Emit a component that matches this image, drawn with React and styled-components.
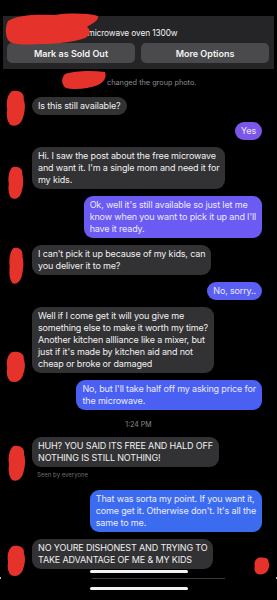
import React from 'react'
import styled, { createGlobalStyle } from 'styled-components'

const Global = createGlobalStyle`
  html, body {
    margin: 0;
    padding: 0;
    background: #000;
  }
  body {
    font-family: Inter, "Noto Sans", sans-serif;
    -webkit-font-smoothing: antialiased;
  }
`

const Screen = styled.div`
  width: 277px;
  height: 600px;
  background: #000;
  overflow: hidden;
  padding-top: 16px;
  box-sizing: border-box;
  display: flex;
  flex-direction: column;
`

const Panel = styled.div`
  position: relative;
  margin: 0 3px;
  background: #252527;
  padding: 12px 5px 6px 4px;
  display: flex;
  flex-direction: column;
  gap: 5px;
`

const Title = styled.div`
  position: relative;
  color: #f2f2f2;
  font-size: 8.3px;
  line-height: 10px;
  letter-spacing: -0.1px;
  text-align: center;
  padding-right: 11px;
`

const ButtonRow = styled.div`
  display: grid;
  grid-template-columns: 1fr 1fr;
  gap: 6px;
`

const Button = styled.div`
  height: 20px;
  border-radius: 5px;
  background: #4a4a4c;
  color: #f4f4f4;
  font-size: 9px;
  font-weight: 600;
  display: flex;
  align-items: center;
  justify-content: center;
`

const SystemLine = styled.div`
  display: flex;
  align-items: center;
  margin-top: 8px;
  padding-left: 60px;
  height: 10px;
  font-size: 7.3px;
  color: #8e8e93;
`

const NameRedact = styled.span`
  position: relative;
  width: 47px;
  height: 10px;
`

const Scribble = styled.svg`
  position: absolute;
  top: ${p => p.$top}px;
  left: ${p => p.$left ?? 0}px;
  width: ${p => p.$w}px;
  height: ${p => p.$h}px;
  z-index: 2;
  pointer-events: none;
`

const Thread = styled.div`
  display: flex;
  flex-direction: column;
  gap: 7px;
  margin-top: 10px;
`

const Row = styled.div`
  position: relative;
  display: flex;
  justify-content: ${p => (p.$mine ? 'flex-end' : 'flex-start')};
  padding: ${p => (p.$mine ? '0 15px 0 0' : '0 0 0 5px')};
`

const AvatarSlot = styled.div`
  position: relative;
  width: 27px;
  flex: none;
`

const Bubble = styled.div`
  background: ${p => p.$bg || '#323234'};
  color: ${p => (p.$bg ? '#ebe9ff' : '#f0f0f0')};
  border-radius: 9px;
  padding: 3px 6px;
  font-size: 9px;
  letter-spacing: -0.15px;
  line-height: 12px;
  white-space: pre-line;
`

const Time = styled.div`
  padding-top: 3px;
  height: 10px;
  line-height: 10px;
  text-align: center;
  font-size: 7px;
  color: #8a8a8e;
`

const Seen = styled.div`
  margin: -3px 0 4px 37px;
  height: 8px;
  line-height: 8px;
  font-size: 6px;
  color: #6c6c70;
`

const Footer = styled.div`
  position: relative;
  display: flex;
  flex-direction: column;
  align-items: center;
  padding-top: 1px;
`

const HomeBar = styled.div`
  width: 98px;
  height: 3px;
  border-radius: 2px;
  background: #f4f4f4;
`

const Divider = styled.div`
  align-self: stretch;
  display: flex;
  justify-content: space-between;
  align-items: center;
  margin: 4px 0 8px;
  height: 2px;

  span {
    width: 1px;
    height: 2px;
    background: #bbb;
  }
  i {
    width: 133px;
    height: 1px;
    margin-left: 40px;
    background: #3a3a3c;
  }
`

const RED = '#e5332b'

const Blob = ({ top, left, w, h }) => (
  <Scribble $top={top} $left={left} $w={w} $h={h} viewBox="0 0 20 36" preserveAspectRatio="none">
    <path
      fill={RED}
      d="M7 1 C13 0 18 3 17 9 C19 15 18 22 16 28 C14 34 9 36 5 34 C2 31 1 25 2 19 C1 13 2 7 4 4 C5 2 6 1 7 1 Z"
    />
  </Scribble>
)

const Avatar = ({ top, left = 0, w = 22, h = 34 }) => (
  <AvatarSlot>
    <Blob top={top} left={left} w={w} h={h} />
  </AvatarSlot>
)

const messages = [
  { kind: 'in', text: 'Is this still available?', av: { top: -7, left: 0, w: 22, h: 37 } },
  { kind: 'out', text: 'Yes', bg: '#7b57e9' },
  { kind: 'in', text: "Hi. I saw the post about the free microwave\nand want it. I'm a single mom and need it for\nmy kids.", av: { top: 19, left: 2, w: 18, h: 34 } },
  { kind: 'out', text: "Ok, well it's still available so just let me\nknow when you want to pick it up and I'll\nhave it ready.", bg: '#6b5bf2' },
  { kind: 'in', text: "I can't pick it up because of my kids, can\nyou deliver it to me?", av: { top: 2, left: 3, w: 17, h: 38 } },
  { kind: 'out', text: 'No, sorry..', bg: '#5a5ff1' },
  { kind: 'in', text: "Well if I come get it will you give me\nsomething else to make it worth my time?\nAnother kitchen allliance like a mixer, but\njust if it's made by kitchen aid and not\ncheap or broke or damaged", av: { top: 44, left: 0, w: 22, h: 32 } },
  { kind: 'out', text: "No, but I'll take half off my asking price for\nthe microwave.", bg: '#4a60f3' },
  { kind: 'time', text: '1:24 PM' },
  { kind: 'in', text: 'HUH? YOU SAID ITS FREE AND HALD OFF\nNOTHING IS STILL NOTHING!', av: { top: 8, left: 2, w: 20, h: 37 } },
  { kind: 'seen', text: 'Seen by everyone' },
  { kind: 'out', text: "That was sorta my point. If you want it,\ncome get it. Otherwise don't. It's all the\nsame to me.", bg: '#3b6cf0' },
  { kind: 'in', text: 'NO YOURE DISHONEST AND TRYING TO\nTAKE ADVANTAGE OF ME & MY KIDS', av: { top: 6, left: 1, w: 21, h: 32 }, corner: true },
]

const App = () => {
  return (
    <Screen>
      <Global />
      <Panel>
        <Scribble $top={-3} $left={2} $w={95} $h={32} viewBox="0 0 95 32" preserveAspectRatio="none">
          <path
            fill={RED}
            d="M3 8 C12 2 30 1 50 2 C64 0 82 0 93 3 C94 8 86 11 82 14 C86 17 86 22 80 25 C68 29 52 31 34 31 C20 32 8 32 4 28 C0 24 0 13 3 8 Z"
          />
        </Scribble>
        <Title>microwave oven 1300w</Title>
        <ButtonRow>
          <Button>Mark as Sold Out</Button>
          <Button>More Options</Button>
        </ButtonRow>
      </Panel>

      <SystemLine>
        <NameRedact>
          <Scribble $top={-7} $left={0} $w={47} $h={20} viewBox="0 0 47 20" preserveAspectRatio="none">
            <path
              fill={RED}
              d="M5 4 C14 1 30 0 45 2 C47 7 44 12 38 15 C28 19 14 20 6 18 C1 15 1 8 5 4 Z"
            />
          </Scribble>
        </NameRedact>
        changed the group photo.
      </SystemLine>

      <Thread>
        {messages.map((m, i) => {
          if (m.kind === 'time') return <Time key={i}>{m.text}</Time>
          if (m.kind === 'seen') return <Seen key={i}>{m.text}</Seen>
          const mine = m.kind === 'out'
          return (
            <Row key={i} $mine={mine}>
              {!mine && <Avatar {...m.av} />}
              <Bubble $bg={m.bg}>{m.text}</Bubble>
              {m.corner && <Blob top={18} left={253} w={18} h={18} />}
            </Row>
          )
        })}
      </Thread>

      <Footer>
        <HomeBar />
        <Divider>
          <span />
          <i />
          <span />
        </Divider>
        <HomeBar />
      </Footer>
    </Screen>
  )
}

export default App
